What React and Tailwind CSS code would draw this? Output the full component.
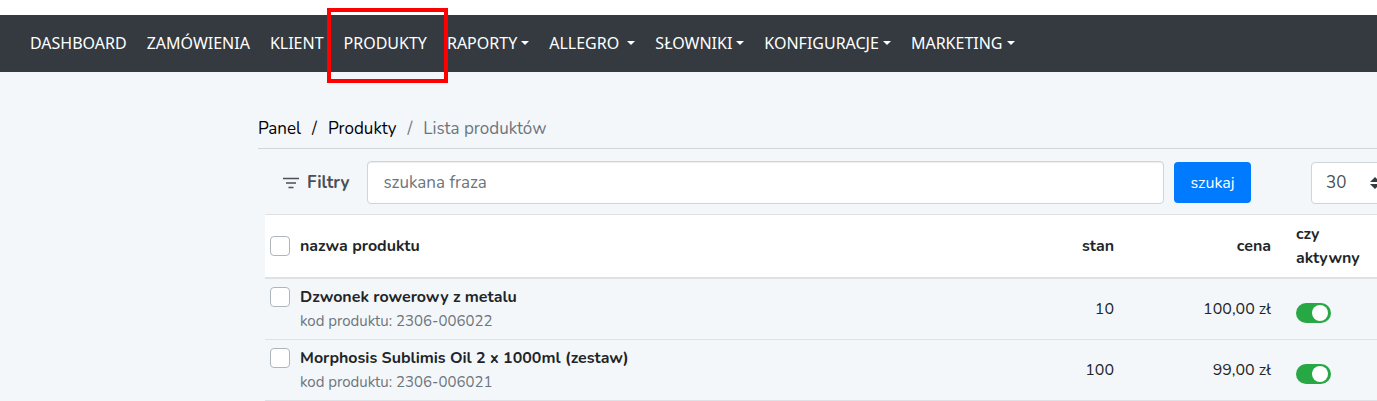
const NAV = [
  { label: 'DASHBOARD' },
  { label: 'ZAMÓWIENIA' },
  { label: 'KLIENT' },
  { label: 'PRODUKTY', marked: true },
  { label: 'RAPORTY', menu: true },
  { label: 'ALLEGRO\u00a0', menu: true },
  { label: 'SŁOWNIKI', menu: true },
  { label: 'KONFIGURACJE', menu: true },
  { label: 'MARKETING', menu: true },
]

const PRODUCTS = [
  { name: 'Dzwonek rowerowy z metalu', code: '2306-006022', stock: 10, price: '100,00 zł' },
  { name: 'Morphosis Sublimis Oil 2 x 1000ml (zestaw)', code: '2306-006021', stock: 100, price: '99,00 zł' },
]

function NavItem({ label, menu, marked }) {
  return (
    <li className="relative">
      <a href="#" className="flex items-center gap-1 px-[10px] whitespace-nowrap text-white">
        {label}
        {menu && (
          <svg viewBox="0 0 8 4" className="h-1 w-2" fill="currentColor" aria-hidden="true">
            <path d="M0 0h8L4 4z" />
          </svg>
        )}
      </a>
      {marked && (
        <span className="pointer-events-none absolute -top-[23px] -right-[11px] -bottom-[28px] -left-[7px] z-10 border-4 border-[#ff0000]" />
      )}
    </li>
  )
}

function Checkbox({ label }) {
  return (
    <input
      type="checkbox"
      aria-label={label}
      className="block size-5 appearance-none rounded border border-[#adb5bd] bg-white checked:bg-[#007bff]"
    />
  )
}

function Toggle({ label }) {
  return (
    <input
      type="checkbox"
      role="switch"
      defaultChecked
      aria-label={label}
      className="mt-2 flex h-5 w-[35px] appearance-none items-center rounded-full bg-[#adb5bd] px-[3px] before:size-4 before:rounded-full before:bg-white checked:justify-end checked:bg-[#28a745]"
    />
  )
}

function Filters() {
  return (
    <form className="flex items-center pt-3 pb-[10px] pl-[25px]" onSubmit={(e) => e.preventDefault()}>
      <button type="button" className="flex items-center gap-2 text-[17px] font-bold text-[#495057]">
        <svg viewBox="0 0 16 12" className="h-3 w-4" stroke="currentColor" strokeWidth="1.4" aria-hidden="true">
          <path d="M0 1.5h16M3 6h10M5.5 10.5h5" />
        </svg>
        Filtry
      </button>
      <input
        type="text"
        aria-label="szukana fraza"
        placeholder="szukana fraza"
        className="ml-[18px] h-[43px] min-w-0 flex-1 rounded border border-[#ced4da] bg-white px-[15px] text-[17px] text-[#495057] shadow-[inset_0_1px_1px_rgba(0,0,0,0.075)] placeholder:text-[#6c757d]"
      />
      <button type="submit" className="ml-[10px] h-[41px] w-[77px] rounded bg-[#007bff] text-base text-white">
        szukaj
      </button>
      <div className="relative -mr-3 ml-[60px] w-[78px] shrink-0">
        <select
          aria-label="Liczba produktów"
          className="block h-[42px] w-full appearance-none rounded border border-[#ced4da] bg-white pl-[14px] text-[17px] text-[#495057]"
        >
          <option>30</option>
          <option>60</option>
          <option>100</option>
        </select>
        <svg viewBox="0 0 10 12" className="pointer-events-none absolute top-[15px] right-[9px] h-3 w-[10px]" fill="#343a40" aria-hidden="true">
          <path d="M5 0l5 5H0zM0 7h10l-5 5z" />
        </svg>
      </div>
    </form>
  )
}

function ProductTable() {
  return (
    <table className="w-full table-fixed border-separate border-spacing-0 text-base text-[#212529]">
      <colgroup>
        <col className="w-[30px]" />
        <col />
        <col className="w-[110px]" />
        <col className="w-[157px]" />
        <col className="w-[101px]" />
      </colgroup>
      <thead>
        <tr className="bg-white *:border-t *:border-b-2 *:border-[#dee2e6] *:px-[5px] *:py-[7px] *:font-bold">
          <th className="text-left">
            <Checkbox label="Zaznacz wszystkie" />
          </th>
          <th className="text-left">nazwa produktu</th>
          <th className="text-right">stan</th>
          <th className="text-right">cena</th>
          <th className="text-left">
            <span className="block w-16 pl-[15px]">czy aktywny</span>
          </th>
        </tr>
      </thead>
      <tbody>
        {PRODUCTS.map((p) => (
          <tr key={p.code} className="*:border-b *:border-[#dee2e6] *:px-[5px] *:py-[6px]">
            <td className="align-top">
              <div className="pt-[2px]">
                <Checkbox label={p.name} />
              </div>
            </td>
            <td>
              <a href="#" className="block font-bold">{p.name}</a>
              <span className="block text-[15px] leading-6 text-[#6c757d]">kod produktu: {p.code}</span>
            </td>
            <td className="text-right">{p.stock}</td>
            <td className="text-right">{p.price}</td>
            <td>
              <div className="pl-[15px]">
                <Toggle label={`${p.name} aktywny`} />
              </div>
            </td>
          </tr>
        ))}
      </tbody>
    </table>
  )
}

export default function App() {
  return (
    <div className="min-h-screen overflow-hidden bg-[#f4f7fa] font-['Nunito','Lato',sans-serif] leading-6">
      <header className="border-t-[15px] border-white bg-[#343a40]">
        <nav className="px-5 pt-4 pb-[17px] font-['Noto_Sans',sans-serif] text-base">
          <ul className="flex">
            {NAV.map((item) => (
              <NavItem key={item.label} {...item} />
            ))}
          </ul>
        </nav>
      </header>
      <main className="pt-[45px] pl-[258px]">
        <nav aria-label="breadcrumb" className="border-b border-[#d3d6d9] pb-[7px] text-[17px] leading-6">
          <ol className="flex gap-[11px] text-black">
            <li><a href="#">Panel</a></li>
            <li aria-hidden="true">/</li>
            <li><a href="#">Produkty</a></li>
            <li aria-hidden="true" className="text-[#6c757d]">/</li>
            <li className="text-[#6c757d]">Lista produktów</li>
          </ol>
        </nav>
        <Filters />
        <div className="pl-[7px]">
          <ProductTable />
        </div>
      </main>
    </div>
  )
}
